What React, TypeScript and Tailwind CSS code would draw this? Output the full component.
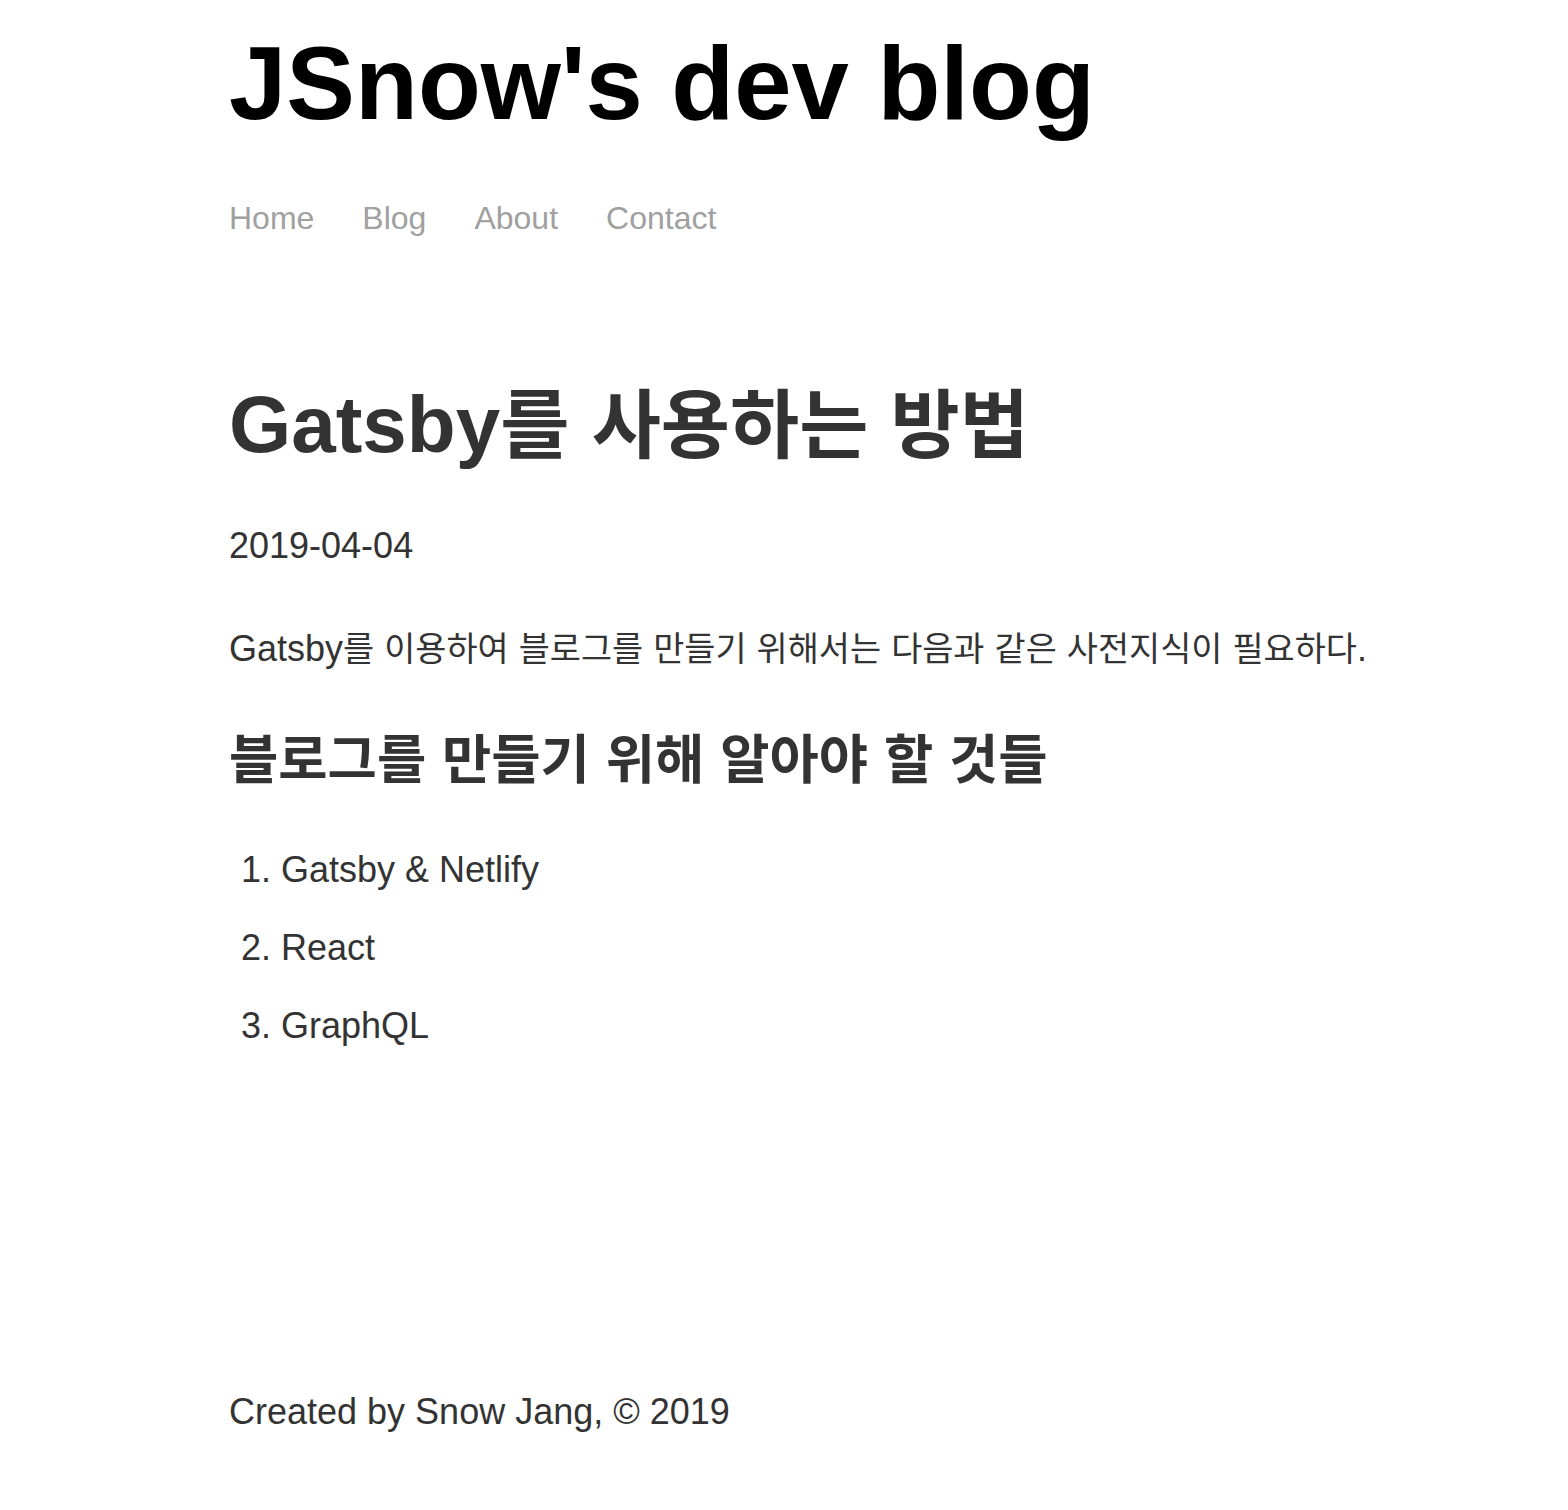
import React from 'react';

const font = 'font-["Liberation_Sans","Noto_Sans_CJK_KR",sans-serif]';

// Hangul in Noto CJK runs a little wider than the original font, so shrink the runs a bit
const ko = (text: string) =>
  text.split(/([가-힣]+)/).map((part, i) =>
    /[가-힣]/.test(part) ? (
      <span key={i} className="text-[0.94em]">
        {part}
      </span>
    ) : (
      <React.Fragment key={i}>{part}</React.Fragment>
    )
  );

const navItems = ['Home', 'Blog', 'About', 'Contact'];
const items = ['Gatsby & Netlify', 'React', 'GraphQL'];

export default function App() {
  return (
    <div className={`${font} min-h-[1510px] bg-white pl-[229px] pr-[40px] pt-[24px]`}>
      <header>
        <h1 className="text-[103px] leading-[120px] font-bold text-black">JSnow's dev blog</h1>
        <nav className="mt-[54px] flex gap-[48px] text-[32px] leading-[40px] text-[#a0a0a0]">
          {navItems.map((n) => (
            <a key={n} href="#">
              {n}
            </a>
          ))}
        </nav>
      </header>

      <main className="text-[#333]">
        <h2 className="mt-[139px] text-[80px] leading-[96px] font-bold">{ko('Gatsby를 사용하는 방법')}</h2>
        <p className="mt-[50px] text-[36px] leading-[44px]">2019-04-04</p>
        <p className="mt-[59px] text-[36px] leading-[44px] whitespace-nowrap">
          {ko('Gatsby를 이용하여 블로그를 만들기 위해서는 다음과 같은 사전지식이 필요하다.')}
        </p>
        <h3 className="mt-[54px] text-[57px] leading-[68px] font-bold">{ko('블로그를 만들기 위해 알아야 할 것들')}</h3>
        <ol className="mt-[54px] list-decimal space-y-[34px] pl-[52px] text-[36px] leading-[44px]">
          {items.map((it) => (
            <li key={it}>{it}</li>
          ))}
        </ol>
      </main>

      <footer className="mt-[342px] text-[36px] leading-[44px] text-[#333]">
        Created by Snow Jang, © 2019
      </footer>
    </div>
  );
}
